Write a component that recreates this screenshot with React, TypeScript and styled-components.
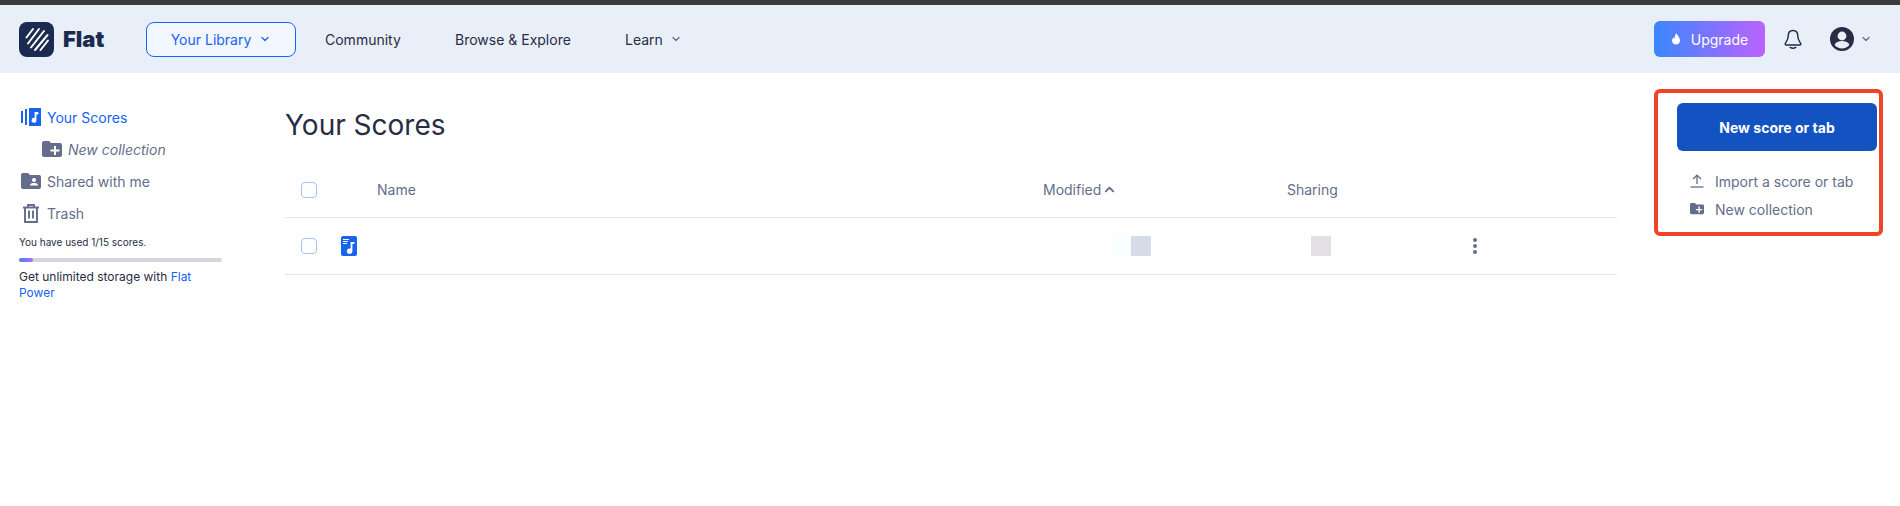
import styled, { createGlobalStyle } from "styled-components"
import { ChevronDown, ChevronUp } from "lucide-react"

const GlobalStyle = createGlobalStyle`
  html, body {
    margin: 0;
    padding: 0;
    height: 100%;
    background: #fff;
    font-family: Inter, "Liberation Sans", sans-serif;
  }
  * {
    box-sizing: border-box;
  }
`

const LogoIcon = () => (
  <svg width="35" height="35" viewBox="0 0 35 35">
    <rect width="35" height="35" rx="8" fill="#1b2a50" />
    <g stroke="#fff" strokeWidth="2" strokeLinecap="round">
      <path d="M7.5 15.5 L14 7" />
      <path d="M9 21.5 L20 7" />
      <path d="M12 25.5 L25 9" />
      <path d="M16 28 L28.5 13" />
      <path d="M21.5 28 L29 18.5" />
    </g>
  </svg>
)

const FlameIcon = () => (
  <svg width="10" height="12" viewBox="0 0 10 12">
    <path
      d="M5.4 0 C5.6 2 9 4 9 7.5 C9 10 7.2 11.6 5 11.6 C2.8 11.6 1 10 1 7.5 C1 6 1.8 5 2.6 4.2 C2.8 5.2 3.2 5.6 3.6 5.8 C3.6 3.8 4.2 1.6 5.4 0 Z"
      fill="#fff"
    />
  </svg>
)

const BellIcon = () => (
  <svg width="18" height="20" viewBox="0 0 18 20" fill="none" stroke="#1b2a50" strokeWidth="1.4">
    <path d="M9 1.5 C5.6 1.5 4.2 4.2 4.2 7 C4.2 11 2.2 12.6 1.2 14.6 C1 15.4 1.4 16 2.2 16 H15.8 C16.6 16 17 15.4 16.8 14.6 C15.8 12.6 13.8 11 13.8 7 C13.8 4.2 12.4 1.5 9 1.5 Z" />
    <path d="M6.2 18.4 C7.6 19.2 10.4 19.2 11.8 18.4" strokeLinecap="round" />
  </svg>
)

const AvatarIcon = () => (
  <svg width="24" height="24" viewBox="0 0 24 24">
    <circle cx="12" cy="12" r="12" fill="#282c44" />
    <circle cx="12" cy="9" r="4.4" fill="#e8eff9" />
    <path d="M4.6 18 C5.6 15 8.6 14 12 14 C15.4 14 18.4 15 19.4 18 C17.6 20.2 15 21.4 12 21.4 C9 21.4 6.4 20.2 4.6 18 Z" fill="#e8eff9" />
  </svg>
)

const ScoresIcon = () => (
  <svg width="20" height="18" viewBox="0 0 20 18">
    <rect x="0" y="3" width="2" height="12" fill="#1664f0" />
    <rect x="4" y="1" width="2" height="16" fill="#1664f0" />
    <rect x="8" y="0" width="12" height="18" fill="#1664f0" />
    <path d="M13.6 4 H17.4 V6.4 H15.4 V12.2 A2.4 2.4 0 1 1 13.6 10 Z" fill="#fff" />
  </svg>
)

const FolderPlusIcon = ({ size = 20, color = "#646d8c" }: { size?: number; color?: string }) => (
  <svg width={size} height={(size * 16) / 20} viewBox="0 0 20 16">
    <path d="M2 0 H7 L9 2 H18 A2 2 0 0 1 20 4 V14 A2 2 0 0 1 18 16 H2 A2 2 0 0 1 0 14 V2 A2 2 0 0 1 2 0 Z" fill={color} />
    <path d="M12 5 H14 V8.5 H17.5 V10.5 H14 V14 H12 V10.5 H8.5 V8.5 H12 Z" fill="#fff" />
  </svg>
)

const FolderUserIcon = () => (
  <svg width="20" height="16" viewBox="0 0 20 16">
    <path d="M2 0 H7 L9 2 H18 A2 2 0 0 1 20 4 V14 A2 2 0 0 1 18 16 H2 A2 2 0 0 1 0 14 V2 A2 2 0 0 1 2 0 Z" fill="#646d8c" />
    <circle cx="13" cy="7" r="2" fill="#fff" />
    <path d="M9 12.4 C9 10.6 11 10 13 10 C15 10 17 10.6 17 12.4 Z" fill="#fff" />
  </svg>
)

const TrashIcon = () => (
  <svg width="18" height="19" viewBox="0 0 18 19" fill="none" stroke="#646d8c" strokeWidth="1.9">
    <path d="M1 3.5 H17" />
    <path d="M6 3.5 V1 H12 V3.5" />
    <path d="M3 3.5 V18 H15 V3.5" />
    <path d="M7 6.5 V14.5" />
    <path d="M11 6.5 V14.5" />
  </svg>
)

const FileNoteIcon = () => (
  <svg width="16" height="20" viewBox="0 0 16 20">
    <rect width="16" height="20" rx="2" fill="#1664f0" />
    <path d="M2 3.5 H8 M2 5.5 H7 M2 7.5 H6" stroke="#fff" strokeWidth="1.1" />
    <path d="M9.6 6 H13.4 V8 H11.4 V15 A2.8 2.8 0 1 1 9.6 12.6 Z" fill="#fff" />
  </svg>
)

const UploadIcon = () => (
  <svg width="14" height="14" viewBox="0 0 14 14" fill="none" stroke="#646d8c" strokeWidth="1.3">
    <path d="M7 10 V1.2" />
    <path d="M3 5 L7 1.2 L11 5" />
    <path d="M0.5 13 H13.5" />
  </svg>
)

const KebabIcon = () => (
  <svg width="6" height="18" viewBox="0 0 6 18" fill="#646d8c">
    <circle cx="3" cy="3" r="2" />
    <circle cx="3" cy="9" r="2" />
    <circle cx="3" cy="15" r="2" />
  </svg>
)

export default function App() {
  return (
    <>
      <GlobalStyle />
      <Page>
        <TopStrip />
        <NavBar>
          <Brand>
            <LogoIcon />
            <BrandName>Flat</BrandName>
          </Brand>
          <LibraryButton>
            Your Library
            <ChevronDown size={12} strokeWidth={2.5} />
          </LibraryButton>
          <NavLinks>
            <NavLink $width={130}>Community</NavLink>
            <NavLink $width={170}>Browse &amp; Explore</NavLink>
            <NavLink>
              Learn
              <MutedChevron>
                <ChevronDown size={12} strokeWidth={2.5} />
              </MutedChevron>
            </NavLink>
          </NavLinks>
          <NavRight>
            <UpgradeButton>
              <FlameIcon />
              Upgrade
            </UpgradeButton>
            <BellIcon />
            <AccountBox>
              <AvatarIcon />
              <MutedChevron>
                <ChevronDown size={12} strokeWidth={2.5} />
              </MutedChevron>
            </AccountBox>
          </NavRight>
        </NavBar>
        <Body>
          <Sidebar>
            <SideItem $active>
              <ScoresIcon />
              Your Scores
            </SideItem>
            <SideItem $nested>
              <FolderPlusIcon />
              <em>New collection</em>
            </SideItem>
            <SideItem>
              <FolderUserIcon />
              Shared with me
            </SideItem>
            <SideItem>
              <TrashWrap>
                <TrashIcon />
              </TrashWrap>
              Trash
            </SideItem>
            <UsageText>You have used 1/15 scores.</UsageText>
            <UsageTrack>
              <UsageFill />
            </UsageTrack>
            <StorageText>
              Get unlimited storage with <PowerLink>Flat Power</PowerLink>
            </StorageText>
          </Sidebar>
          <Main>
            <Title>Your Scores</Title>
            <HeaderRow>
              <CheckCell>
                <Checkbox />
              </CheckCell>
              <NameCell>Name</NameCell>
              <ModifiedCell>
                Modified
                <ChevronUp size={15} strokeWidth={3} />
              </ModifiedCell>
              <SharingCell>Sharing</SharingCell>
            </HeaderRow>
            <ScoreRow>
              <CheckCell>
                <Checkbox />
              </CheckCell>
              <IconCell>
                <FileNoteIcon />
              </IconCell>
              <BlurArea>
                <BlurPixel $color="#f8fffe" />
                <BlurPixel $color="#d6dbe8" />
              </BlurArea>
              <SharingBlur>
                <BlurPixel $color="#e3dfe2" />
              </SharingBlur>
              <MenuCell>
                <KebabIcon />
              </MenuCell>
            </ScoreRow>
          </Main>
          <Actions>
            <NewScoreButton>New score or tab</NewScoreButton>
            <ActionLink $first>
              <UploadIcon />
              Import a score or tab
            </ActionLink>
            <ActionLink>
              <FolderPlusIcon size={14} />
              New collection
            </ActionLink>
          </Actions>
        </Body>
        <Highlight />
      </Page>
    </>
  )
}

const Page = styled.div`
  position: relative;
  width: 1900px;
  height: 506px;
  overflow: hidden;
  background: #fff;
`

const TopStrip = styled.div`
  height: 5px;
  background: #3c3c3c;
`

const NavBar = styled.header`
  height: 68px;
  display: flex;
  align-items: center;
  padding: 0 0 0 19px;
  background: #e8eff9;
`

const Brand = styled.div`
  width: 127px;
  display: flex;
  align-items: center;
  gap: 9px;
`

const BrandName = styled.span`
  font-size: 22px;
  font-weight: 900;
  color: #1b2a50;
`

const LibraryButton = styled.div`
  width: 150px;
  height: 35px;
  display: flex;
  align-items: center;
  justify-content: center;
  gap: 8px;
  border: 1px solid #1664f0;
  border-radius: 8px;
  background: #f2f6fe;
  color: #1664f0;
  font-size: 14px;
`

const NavLinks = styled.nav`
  display: flex;
  align-items: center;
  margin-left: 29px;
`

const NavLink = styled.div<{ $width?: number }>`
  width: ${(p) => (p.$width ? `${p.$width}px` : "auto")};
  display: flex;
  align-items: center;
  gap: 7px;
  color: #282c44;
  font-size: 14px;
`

const MutedChevron = styled.span`
  display: flex;
  color: #646d8c;
`

const NavRight = styled.div`
  display: flex;
  align-items: center;
  margin-left: auto;
  padding-right: 28px;
`

const UpgradeButton = styled.div`
  width: 111px;
  height: 36px;
  display: flex;
  align-items: center;
  justify-content: center;
  gap: 10px;
  margin-right: 19px;
  border-radius: 6px;
  background: linear-gradient(90deg, #3b86ff, #bb63ff);
  color: #fff;
  font-size: 14px;
`

const AccountBox = styled.div`
  display: flex;
  align-items: center;
  gap: 6px;
  margin-left: 28px;
`

const Body = styled.div`
  display: grid;
  grid-template-columns: 285px 1332px 1fr;
`

const Sidebar = styled.aside`
  padding: 28px 0 0 19px;
  width: 222px;
`

const SideItem = styled.div<{ $active?: boolean; $nested?: boolean }>`
  height: 32px;
  display: flex;
  align-items: center;
  gap: 6px;
  margin-left: ${(p) => (p.$nested ? "23px" : "2px")};
  color: ${(p) => (p.$active ? "#1664f0" : "#646d8c")};
  font-size: 14px;
`

const TrashWrap = styled.span`
  display: flex;
  width: 20px;
  justify-content: center;
`

const UsageText = styled.div`
  margin-top: 6px;
  color: #282c44;
  font-size: 10px;
  line-height: 14px;
`

const UsageTrack = styled.div`
  height: 4px;
  margin-top: 9px;
  border-radius: 2px;
  background: #d2d7de;
`

const UsageFill = styled.div`
  width: 14px;
  height: 4px;
  border-radius: 2px;
  background: linear-gradient(90deg, #3b86ff, #bb63ff);
`

const StorageText = styled.div`
  margin-top: 7px;
  color: #282c44;
  font-size: 12px;
  line-height: 16px;
`

const PowerLink = styled.span`
  color: #1664f0;
`

const Main = styled.main``

const Title = styled.h1`
  height: 36px;
  margin: 34px 0 0;
  color: #282c44;
  font-size: 28px;
  font-weight: 400;
  line-height: 36px;
`

const HeaderRow = styled.div`
  height: 75px;
  margin-top: 0;
  padding-top: 19px;
  display: flex;
  align-items: center;
  border-bottom: 1px solid #e6e6e8;
  color: #646d8c;
  font-size: 14px;
`

const ScoreRow = styled.div`
  height: 57px;
  display: flex;
  align-items: center;
  border-bottom: 1px solid #e6e6e8;
`

const CheckCell = styled.div`
  width: 56px;
  padding-left: 16px;
  display: flex;
`

const Checkbox = styled.div`
  width: 16px;
  height: 16px;
  border: 1px solid #a3c1f8;
  border-radius: 4px;
  background: #fff;
`

const NameCell = styled.div`
  width: 702px;
  padding-left: 36px;
`

const ModifiedCell = styled.div`
  width: 244px;
  display: flex;
  align-items: center;
  gap: 1px;
`

const SharingCell = styled.div``

const IconCell = styled.div`
  width: 770px;
  display: flex;
`

const BlurArea = styled.div`
  display: flex;
  width: 200px;
`

const SharingBlur = styled.div`
  display: flex;
  width: 161px;
`

const BlurPixel = styled.div<{ $color: string }>`
  width: 20px;
  height: 20px;
  background: ${(p) => p.$color};
`

const MenuCell = styled.div`
  display: flex;
`

const Actions = styled.aside`
  padding: 30px 0 0 60px;
`

const NewScoreButton = styled.div`
  width: 200px;
  height: 48px;
  display: flex;
  align-items: center;
  justify-content: center;
  border-radius: 6px;
  background: #1353c1;
  color: #fff;
  font-size: 14px;
  font-weight: 700;
`

const ActionLink = styled.div<{ $first?: boolean }>`
  height: 28px;
  display: flex;
  align-items: center;
  gap: 11px;
  margin-top: ${(p) => (p.$first ? "16px" : "0")};
  padding-left: 13px;
  color: #646d8c;
  font-size: 14px;
`

const Highlight = styled.div`
  position: absolute;
  left: 1654px;
  top: 89px;
  width: 229px;
  height: 147px;
  border: 4px solid #f04428;
  border-radius: 6px;
  pointer-events: none;
`
